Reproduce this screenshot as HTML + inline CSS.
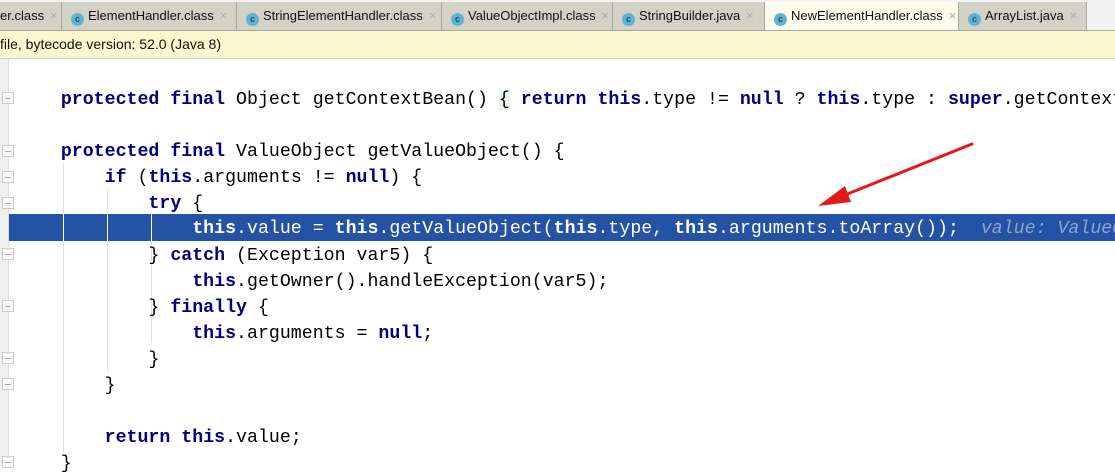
<!DOCTYPE html>
<html><head><style>
body{margin:0;width:1115px;height:466px;overflow:hidden;background:#fff;position:relative;font-family:"Liberation Sans",sans-serif}
#tabs{position:absolute;left:0;top:0;width:1115px;height:30px;background:#f2f2f2;border-bottom:1px solid #a8a8a8}
.tab{position:absolute;top:2px;height:28px;background:#d4d2c7;border-right:1px solid #a9a9a0;font-size:13px;color:#111;line-height:28px;box-sizing:border-box;white-space:nowrap;overflow:hidden}
.tab.act{background:#fdfced;top:2px}
.ic{display:inline-block;width:13px;height:13px;border-radius:50%;background:#5fb4d4;vertical-align:-2px;margin:0 4px 0 9px;font-size:9px;line-height:13px;text-align:center;color:#1d4b6a;font-weight:bold}
.x{color:#aaa;margin-left:6px;font-size:13px}
#note{position:absolute;left:0;top:31px;width:1115px;height:27px;background:#fdf7d0;border-bottom:1px solid #cfcfcf;font-size:14px;line-height:27px;color:#111}
#gut{position:absolute;left:0;top:59px;width:8px;height:407px;background:#efefef;border-right:1px solid #ddd}
.ln{position:absolute;left:9px;width:1106px;padding-left:8px;padding-top:2px;box-sizing:border-box;overflow:hidden;height:26px;line-height:26px;font-family:"Liberation Mono",monospace;font-size:18.25px;white-space:pre;color:#000}
.ln b{color:#000080}
.hl{background:#2452a4;color:#fff}
.hl b{color:#fff}
.hint{color:#8fa4cc;font-style:italic}
.g{position:absolute;width:1px;background:#e0e0e0}
.fold{position:absolute;left:2px;width:12px;height:12px;border:1px solid #ccc;background:#fafafa;box-sizing:border-box}
.fold:after{content:"";position:absolute;left:2px;top:5px;width:6px;height:1px;background:#aaa}
</style></head><body>
<div id="tabs">
<div class="tab" style="left:0;width:62px">er.class<span class="x">×</span></div>
<div class="tab" style="left:62px;width:175px"><span class="ic">c</span>ElementHandler.class<span class="x">×</span></div>
<div class="tab" style="left:237px;width:205px"><span class="ic">c</span>StringElementHandler.class<span class="x">×</span></div>
<div class="tab" style="left:442px;width:171px"><span class="ic">c</span>ValueObjectImpl.class<span class="x">×</span></div>
<div class="tab" style="left:613px;width:152px"><span class="ic">c</span>StringBuilder.java<span class="x">×</span></div>
<div class="tab act" style="left:765px;width:194px"><span class="ic">c</span>NewElementHandler.class<span class="x">×</span></div>
<div class="tab" style="left:959px;width:128px"><span class="ic">c</span>ArrayList.java<span class="x">×</span></div>
</div>
<div id="note">file, bytecode version: 52.0 (Java 8)</div>
<div id="gut"></div>
<div class="g" style="left:63px;top:163px;height:290px"></div>
<div class="g" style="left:107px;top:189px;height:182px"></div>
<div class="g" style="left:151px;top:215px;height:128px"></div>
<div class="fold" style="top:92px"></div>
<div class="fold" style="top:145px"></div>
<div class="fold" style="top:171px"></div>
<div class="fold" style="top:197px"></div>
<div class="fold" style="top:248px"></div>
<div class="fold" style="top:300px"></div>
<div class="fold" style="top:352px"></div>
<div class="fold" style="top:378px"></div>
<div class="fold" style="top:456px"></div>
<div class="ln" style="top:85px">    <b>protected final</b> Object getContextBean() <span style="background:#e8f4e8">{</span> <b>return this</b>.type != <b>null</b> ? <b>this</b>.type : <b>super</b>.getContextBean(); }</div>
<div class="ln" style="top:137px">    <b>protected final</b> ValueObject getValueObject() {</div>
<div class="ln" style="top:163px">        <b>if</b> (<b>this</b>.arguments != <b>null</b>) {</div>
<div class="ln" style="top:189px">            <b>try</b> {</div>
<div class="ln hl" style="top:214px;height:27px">                <b>this</b>.value = <b>this</b>.getValueObject(<b>this</b>.type, <b>this</b>.arguments.toArray());  <span class="hint">value: ValueObjectImpl</span></div>
<div class="ln" style="top:241px">            } <b>catch</b> (Exception var5) {</div>
<div class="ln" style="top:267px">                <b>this</b>.getOwner().handleException(var5);</div>
<div class="ln" style="top:293px">            } <b>finally</b> {</div>
<div class="ln" style="top:319px">                <b>this</b>.arguments = <b>null</b>;</div>
<div class="ln" style="top:345px">            }</div>
<div class="ln" style="top:371px">        }</div>
<div class="ln" style="top:423px">        <b>return this</b>.value;</div>
<div class="ln" style="top:449px">    }</div>
<div style="position:absolute;left:63px;top:214px;width:1px;height:27px;background:#fff"></div>
<div style="position:absolute;left:107px;top:214px;width:1px;height:27px;background:#fff"></div>
<div style="position:absolute;left:151px;top:214px;width:1px;height:27px;background:#fff"></div>
<svg style="position:absolute;left:0;top:0" width="1115" height="466">
<line x1="972" y1="144" x2="840" y2="197" stroke="#e41a1a" stroke-width="3" stroke-linecap="round"/>
<polygon points="818,206 845,186 851,202" fill="#e41a1a"/>
</svg>
</body></html>
